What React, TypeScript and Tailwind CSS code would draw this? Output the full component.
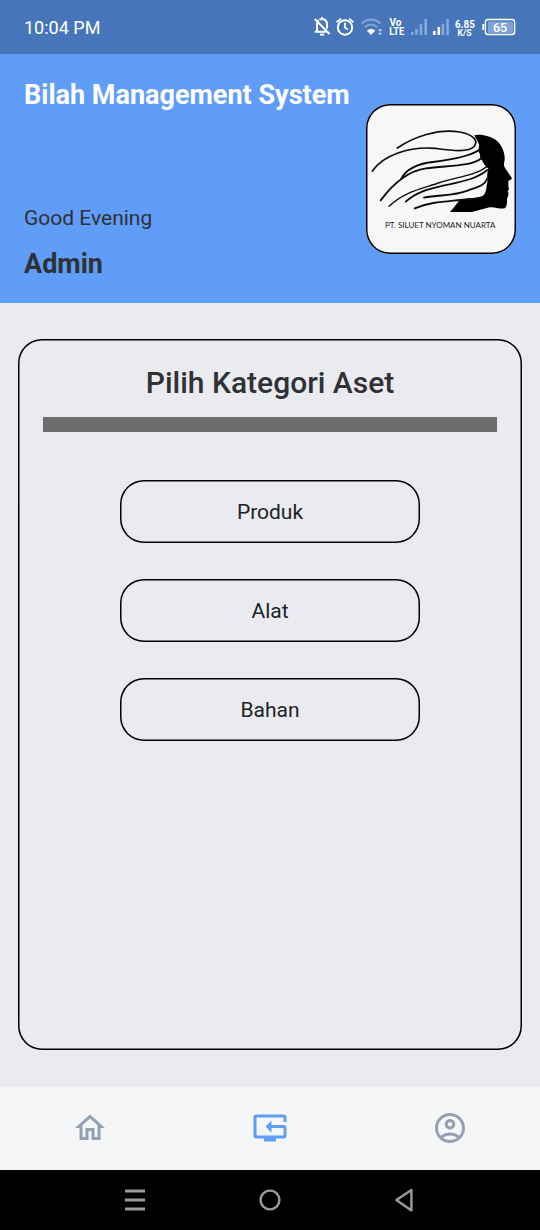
import type { ReactNode } from "react";

function StatusIcons() {
  return (
    <svg width="210" height="30" viewBox="310 12 210 30" fill="none" className="font-[Roboto,sans-serif]">
      <g stroke="#fff" strokeWidth="2">
        <path d="M317 31.5v-7.5c0-2 .5-3 1.7-4M319.5 19.6c3.6-1.8 7.5.4 7.5 4.6v4.5M314.8 31.8h12" />
        <path d="M314.8 19l14.7 15" />
        <path d="M320 34.6h4.2" />
        <path d="M322 17v2.2" />
        <circle cx="345" cy="27.5" r="7.2" />
        <path d="M345 22.8v5l3 1.8M336.6 22.2l4.3-3.6M353.4 22.2l-4.3-3.6" strokeWidth="1.8" />
      </g>
      <g strokeWidth="2.2">
        <path d="M361.5 23.5c5.5-5.3 13.5-5.3 19 0" stroke="#7fa3d7" />
        <path d="M364.8 27.3c3.8-3.5 8.6-3.5 12.4 0" stroke="#7fa3d7" />
        <path d="M367.8 30.8c2-1.7 4.6-1.7 6.6 0l-3.3 3.4z" fill="#fff" stroke="#fff" strokeWidth="1.2" />
      </g>
      <path d="M378.7 29.3h2.8v1.9h-2.8zM378.7 32.7h2.8v1.9h-2.8z" fill="#c5d7f0" />
      <text x="389.5" y="26.4" fontSize="10" fontWeight="700" fill="#fff">Vo</text>
      <text x="389.3" y="35.3" fontSize="10" fontWeight="700" fill="#fff" textLength="15" lengthAdjust="spacingAndGlyphs">LTE</text>
      <g fill="#86a8da">
        <path d="M411 32h2.5v3H411zM415.2 29h2.5v6h-2.5zM419.7 24h2.5v11h-2.5zM424.4 19h2.6v16h-2.6z" />
        <path d="M441.7 24h2.5v11h-2.5zM446.3 19h2.6v16h-2.6z" />
      </g>
      <path d="M433 31h2.6v4H433zM437.5 27h2.6v8h-2.6z" fill="#fff" />
      <text x="455" y="27.6" fontSize="10.5" fontWeight="700" fill="#fff" textLength="19.8" lengthAdjust="spacingAndGlyphs">6.85</text>
      <text x="457.5" y="36" fontSize="8.5" fontWeight="700" fill="#fff" textLength="14" lengthAdjust="spacingAndGlyphs">K/S</text>
      <rect x="488" y="21.5" width="25" height="11.5" fill="#7fa3d7" />
      <rect x="485.4" y="19.5" width="29.2" height="15" rx="2.5" stroke="#fff" strokeWidth="1.4" />
      <path d="M483.2 24v6" stroke="#fff" strokeWidth="1.8" />
      <text x="500" y="31.8" fontSize="12.5" fontWeight="500" fill="#fff" textAnchor="middle">65</text>
    </svg>
  );
}

function CompanyLogo() {
  return (
    <svg width="150" height="150" viewBox="18 18 450 450" fill="none">
      <path
        d="M343 112C360 107 395 114 412 130C430 147 435 170 434 186C431 198 431 206 437 213L455 239C457 244 452 246 446 248C443 255 447 260 445 266L447 273L443 280C448 289 444 295 441 302C442 314 440 327 434 331C420 334 401 325 389 328L335 342H270C281 329 292 316 301 304C330 301 350 301 366 296C382 286 377 268 382 254C383 242 379 233 385 212C377 205 369 196 366 187C357 179 363 174 358 165C351 157 359 150 357 139C353 130 348 122 343 112Z"
        fill="#000"
      />
      <g stroke="#0c0c0c" strokeLinecap="round" strokeWidth="5">
        <path d="M112 150C160 117 234 91 299 102C339 109 356 128 343 145C326 165 271 157 226 151C146 145 70 171 37 219" />
        <path d="M124 242C140 211 174 197 219 192C270 186 325 177 356 157" strokeWidth="5.5" />
        <path d="M62 307C96 261 142 219 198 211C260 202 334 207 365 180" strokeWidth="5.5" />
        <path d="M87 325C132 281 187 272 235 255C290 236 345 235 383 204" strokeWidth="4" />
        <path d="M137 311C173 280 207 273 249 263C300 252 345 246 382 216" />
        <path d="M192 299C242 290 282 294 323 278C351 267 374 264 381 242" strokeWidth="5.5" />
        <path d="M164 331C206 313 250 311 300 306C347 301 377 304 380 280" strokeWidth="5.5" />
      </g>
      <text x="75" y="391" fontSize="24" fill="#222" className="font-[Lato,sans-serif]" textLength="331" lengthAdjust="spacingAndGlyphs">
        PT. SILUET NYOMAN NUARTA
      </text>
    </svg>
  );
}

function CategoryButton({ children }: { children: ReactNode }) {
  return (
    <button className="flex h-[63px] w-[300px] items-center justify-center rounded-3xl pt-0.5 text-[21px] text-[#212226] shadow-[inset_0_0_0_1.5px_#000]">
      {children}
    </button>
  );
}

function NavIcon({ d, label, active = false }: { d: string; label: string; active?: boolean }) {
  return (
    <button aria-label={label} className={active ? "text-[#5f9df7]" : "text-[#94a0b4]"}>
      <svg width="36" height="36" viewBox="0 0 24 24" fill="currentColor">
        <path d={d} />
      </svg>
    </button>
  );
}

export default function App() {
  return (
    <div className="flex h-[1230px] w-[540px] flex-col bg-[#eaebef] font-[Roboto,sans-serif]">
      <div className="flex h-[54px] shrink-0 items-center justify-between bg-[#4676b9] pr-5 pl-6 text-white">
        <span className="pt-0.5 text-[18px] leading-6">10:04 PM</span>
        <StatusIcons />
      </div>

      <header className="flex h-[249px] shrink-0 justify-between bg-[#5f9df9] px-6">
        <div className="flex h-full flex-col text-[#2f3135]">
          <h1 className="mt-[25px] text-[27px] leading-8 font-bold whitespace-nowrap text-white">Bilah Management System</h1>
          <p className="mt-[93px] text-[21px] leading-7">Good Evening</p>
          <p className="mt-4 text-[27px] leading-8 font-bold">Admin</p>
        </div>
        <div className="mt-[49.5px] size-[150px] shrink-0 rounded-3xl bg-[#f7f7f7] shadow-[inset_0_0_0_1.5px_#000]">
          <CompanyLogo />
        </div>
      </header>

      <main className="min-h-0 grow px-[18px] pt-9 pb-[34.5px]">
        <section className="flex h-full flex-col items-center rounded-3xl px-[25.4px] pt-[26px] shadow-[inset_0_0_0_1.5px_#000]">
          <h2 className="text-[30px] leading-9 font-medium text-[#2f3135]">Pilih Kategori Aset</h2>
          <div className="mt-4 h-[15px] w-full bg-[#6c6d6f]" />
          <div className="mt-12 flex flex-col gap-9">
            <CategoryButton>Produk</CategoryButton>
            <CategoryButton>Alat</CategoryButton>
            <CategoryButton>Bahan</CategoryButton>
          </div>
        </section>
      </main>

      <nav className="grid h-[85.5px] shrink-0 grid-cols-3 place-items-center border-t border-[#e0e1e5] bg-[#f4f6f8]">
        <NavIcon label="Home" d="M12 5.69l5 4.5V18h-2v-6H9v6H7v-7.81l5-4.5M12 3L2 12h3v8h6v-6h2v6h6v-8h3L12 3z" />
        <NavIcon
          label="Assets"
          active
          d="M23 8h-2V5H3v12h18v-5H13v3l-4-4 4-4v3h8a2 2 0 0 1 2 2v5a2 2 0 0 1-2 2h-5v2H8v-2H3a2 2 0 0 1-2-2V5a2 2 0 0 1 2-2h18a2 2 0 0 1 2 2z"
        />
        <NavIcon
          label="Profile"
          d="M12 2C6.48 2 2 6.48 2 12s4.48 10 10 10 10-4.48 10-10S17.52 2 12 2zM7.35 18.5C8.66 17.56 10.26 17 12 17s3.34.56 4.65 1.5C15.34 19.44 13.74 20 12 20s-3.34-.56-4.65-1.5zm10.79-1.38C16.45 15.8 14.32 15 12 15s-4.45.8-6.14 2.12C4.7 15.73 4 13.95 4 12c0-4.42 3.58-8 8-8s8 3.58 8 8c0 1.95-.7 3.73-1.86 5.12zM12 6c-1.93 0-3.5 1.57-3.5 3.5S10.07 13 12 13s3.5-1.57 3.5-3.5S13.93 6 12 6zm0 5c-.83 0-1.5-.67-1.5-1.5S11.17 8 12 8s1.5.67 1.5 1.5S12.83 11 12 11z"
        />
      </nav>

      <div className="flex h-[60px] shrink-0 items-center justify-center bg-black">
        <svg width="300" height="30" viewBox="120 1185 300 30" fill="none" stroke="#9b9b9b" strokeWidth="2.4">
          <path d="M125 1191h20M125 1200h20M125 1209h20" strokeWidth="2.8" />
          <circle cx="270" cy="1200" r="9.4" />
          <path d="M411.4 1190v20.4L396.4 1200z" strokeLinejoin="round" />
        </svg>
      </div>
    </div>
  );
}
